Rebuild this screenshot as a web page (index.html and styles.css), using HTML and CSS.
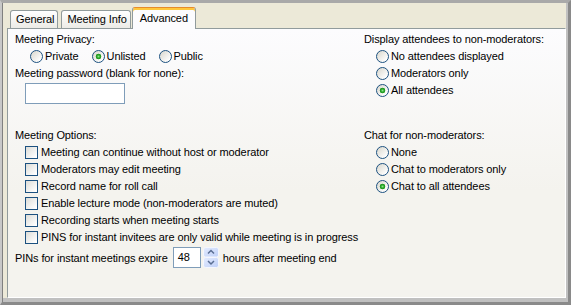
FILE: index.html
```html
<!DOCTYPE html>
<html>
<head>
<meta charset="utf-8">
<title>Advanced</title>
<link rel="stylesheet" href="styles.css">
</head>
<body>
<div class="window">
  <div class="tabs">
    <div class="tab">General</div>
    <div class="tab">Meeting Info</div>
    <div class="tab active">Advanced</div>
  </div>
  <div class="panel">
    <div class="grid">
      <div class="section">
        <div class="row">Meeting Privacy:</div>
        <div class="row radios-inline">
          <span class="opt"><span class="radio"></span>Private</span>
          <span class="opt"><span class="radio checked"></span>Unlisted</span>
          <span class="opt"><span class="radio"></span>Public</span>
        </div>
        <div class="row">Meeting password (blank for none):</div>
        <div class="textbox pw"></div>
      </div>
      <div class="section">
        <div class="row">Display attendees to non-moderators:</div>
        <div class="row opt rlist"><span class="radio"></span>No attendees displayed</div>
        <div class="row opt rlist"><span class="radio"></span>Moderators only</div>
        <div class="row opt rlist"><span class="radio checked"></span>All attendees</div>
      </div>
      <div class="section">
        <div class="row">Meeting Options:</div>
        <div class="row opt clist"><span class="check"></span>Meeting can continue without host or moderator</div>
        <div class="row opt clist"><span class="check"></span>Moderators may edit meeting</div>
        <div class="row opt clist"><span class="check"></span>Record name for roll call</div>
        <div class="row opt clist"><span class="check"></span>Enable lecture mode (non-moderators are muted)</div>
        <div class="row opt clist"><span class="check"></span>Recording starts when meeting starts</div>
        <div class="row opt clist"><span class="check"></span>PINS for instant invitees are only valid while meeting is in progress</div>
      </div>
      <div class="section">
        <div class="row">Chat for non-moderators:</div>
        <div class="row opt rlist"><span class="radio"></span>None</div>
        <div class="row opt rlist"><span class="radio"></span>Chat to moderators only</div>
        <div class="row opt rlist"><span class="radio checked"></span>Chat to all attendees</div>
      </div>
    </div>
    <div class="expire">
      <span>PINs for instant meetings expire</span>
      <div class="textbox num">48</div>
      <svg class="spin" width="16" height="21" viewBox="0 0 16 21">
        <defs>
          <linearGradient id="sg" x1="0" y1="0" x2="1" y2="1">
            <stop offset="0" stop-color="#e3ebfe"/>
            <stop offset="1" stop-color="#bfd0f8"/>
          </linearGradient>
        </defs>
        <rect x="0.5" y="0.5" width="15" height="9.5" rx="2" fill="url(#sg)" stroke="#f4f6fd"/>
        <rect x="0.5" y="10.5" width="15" height="10" rx="2" fill="url(#sg)" stroke="#f4f6fd"/>
        <polyline points="5,6.5 8,3.5 11,6.5" fill="none" stroke="#5a6e93" stroke-width="1.5"/>
        <polyline points="5,14 8,17 11,14" fill="none" stroke="#5a6e93" stroke-width="1.5"/>
      </svg>
      <span>hours after meeting end</span>
    </div>
  </div>
</div>
</body>
</html>
```
FILE: styles.css
```css
* { box-sizing: border-box; }
html, body { margin: 0; padding: 0; }
body {
  font-family: "Liberation Sans", Arial, sans-serif;
  font-size: 11px;
  letter-spacing: -0.1px;
  color: #000;
  background: #ece9d8;
}
.window {
  width: 571px;
  height: 305px;
  display: flex;
  flex-direction: column;
  background: #ece9d8;
  border-top: 3px solid #a9a9a9;
  border-left: 2px solid #c8c8c8;
  border-right: 3px solid #8a8a8a;
  border-bottom: 3px solid #8a8a8a;
  box-shadow: inset 1px 0 0 #808080, inset -2px -4px 0 #c0c0c0;
  padding: 0 2px 4px 5px;
}
.tabs {
  height: 25px;
  flex: none;
  display: flex;
  align-items: flex-end;
  padding-left: 3px;
}
.tab {
  height: 18px;
  line-height: 17px;
  padding: 0 3px 0 5px;
  border: 1px solid #919b9c;
  border-bottom: 0;
  border-radius: 3px 3px 0 0;
  background: linear-gradient(#ffffff, #ecebe6);
  margin-right: 3px;
  white-space: nowrap;
}
.tab.active {
  height: 22px;
  margin-bottom: -1px;
  margin-left: -2px;
  padding: 2px 7px 3px 7px;
  line-height: 16px;
  border-top: 1px solid #e68b2c;
  box-shadow: inset 0 2px 0 #ffc73c;
  background: #fcfcfe;
  position: relative;
  z-index: 1;
}
.panel {
  flex: 1;
  border: 1px solid #919b9c;
  border-right-color: #ffffff;
  border-bottom-color: #ffffff;
  background: linear-gradient(#fcfcfe, #f4f3ee 60%);
  padding: 2px 0 0 7px;
}
.grid {
  display: grid;
  grid-template-columns: 349px 1fr;
  row-gap: 23px;
}
.row {
  height: 17px;
  line-height: 17px;
  white-space: nowrap;
}
.opt {
  display: flex;
  align-items: center;
}
.radios-inline {
  display: flex;
  gap: 13px;
  padding-left: 15px;
}
.rlist { padding-left: 12px; }
.clist { padding-left: 10px; }
.radio {
  flex: none;
  width: 13px;
  height: 13px;
  border-radius: 50%;
  border: 1px solid #1c5180;
  background: linear-gradient(135deg, #d8d6cc, #ffffff 85%);
  margin-right: 2px;
}
.radio.checked {
  background: radial-gradient(circle at 50% 50%, #8be38b 0, #2aa72a 1.6px, #1f951f 2.6px, transparent 3.1px),
              linear-gradient(135deg, #d8d6cc, #ffffff 85%);
}
.check {
  flex: none;
  width: 13px;
  height: 13px;
  border: 1px solid #1c5180;
  background: linear-gradient(135deg, #dcdcd7, #ffffff 90%);
  margin-right: 3px;
}
.textbox {
  border: 1px solid #7f9db9;
  background: #ffffff;
}
.pw {
  width: 100px;
  height: 21px;
  margin: 1px 0 0 10px;
}
.expire {
  display: flex;
  align-items: center;
  height: 21px;
  margin-top: 1px;
  white-space: nowrap;
}
.num {
  width: 28px;
  height: 21px;
  margin-left: 5px;
  padding-left: 4px;
  line-height: 19px;
}
.spin {
  display: block;
  flex: none;
  margin: 0 4px 0 2px;
}
```
